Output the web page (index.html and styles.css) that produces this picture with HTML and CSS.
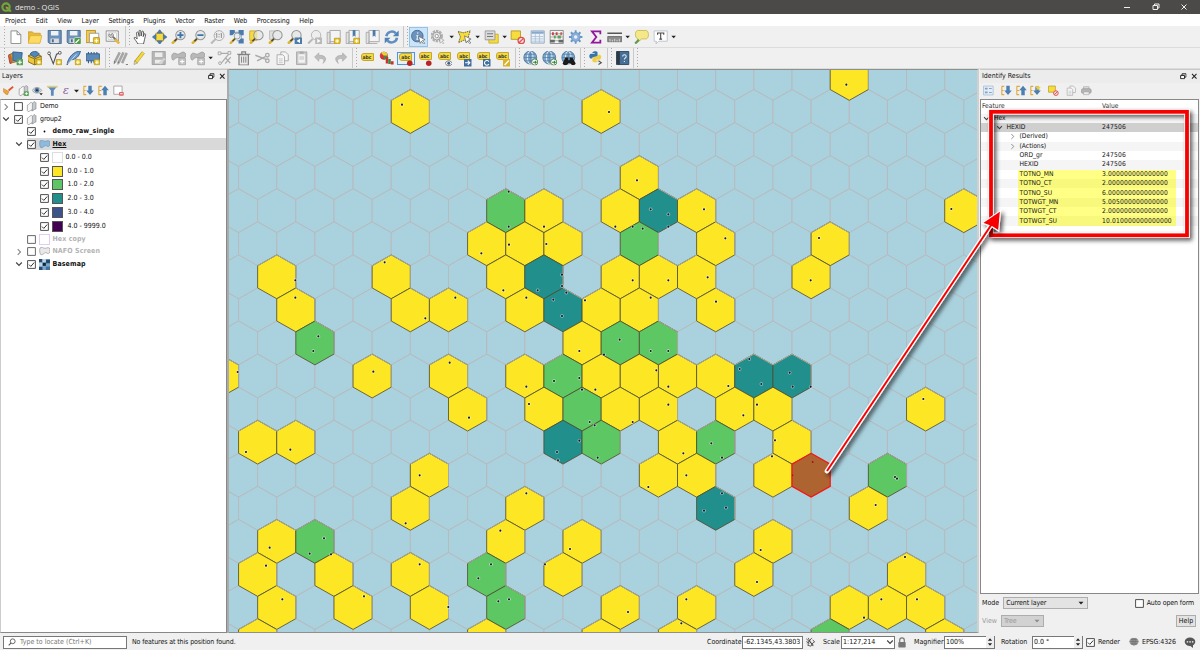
FILE: index.html
```html
<!DOCTYPE html>
<html lang="en">
<head>
<meta charset="utf-8">
<title>demo - QGIS</title>
<link rel="stylesheet" href="styles.css">
</head>
<body>
<svg class="defs" aria-hidden="true">
<defs>
<symbol id="plusbadge" viewBox="0 0 7 7"><rect x=".5" y=".5" width="6" height="6" rx="1" fill="#e8c52c" stroke="#a8891c" stroke-width=".7"/><path d="M3.5 1.7v3.6M1.7 3.5h3.6" stroke="#fff" stroke-width="1.1"/></symbol>
<symbol id="new" viewBox="0 0 16 16"><path d="M3 1.500h6.500l4 4v9.500h-10.500z" fill="#fff" stroke="#8b8b8b"/><path d="M9.500 1.500v4h4" fill="none" stroke="#8b8b8b"/></symbol>
<symbol id="open" viewBox="0 0 16 16"><path d="M1 14.500V2.500h4.500l1.500 1.500h7v3" fill="#e9b93a" stroke="#c99a2a" stroke-width=".8"/><path d="M1 14.700L3.300 6.500h12.400l-2 8.200z" fill="#fddb62" stroke="#d9a932" stroke-width=".8"/></symbol>
<symbol id="save" viewBox="0 0 16 16"><path d="M1 1h14v14h-12.500l-1.500-1.500z" fill="#6a92bd" stroke="#4a6a8c"/><path d="M4 1.500h8v5H4z" fill="#f0f2f4"/><path d="M3.500 9.500h9v5H3.500z" fill="#dcdcdc"/><path d="M5 10.500h2v3H5z" fill="#4a6a8c"/></symbol>
<symbol id="saveas" viewBox="0 0 16 16"><use href="#save"/><rect x="8.500" y="8.500" width="7.500" height="7.500" rx="1.500" fill="#4f9a4c" stroke="#fff" stroke-width=".6"/><path d="M10 14.500l4-4" stroke="#fff" stroke-width="1.400"/></symbol>
<symbol id="layout" viewBox="0 0 16 16"><path d="M1 1h10v13H1z" fill="#f3c94c" stroke="#b58f23"/><path d="M4.500 4h10v10h-10z" fill="#fff" stroke="#9a9a9a"/><use href="#plusbadge" x="8" y="8" width="8" height="8"/></symbol>
<symbol id="layoutmgr" viewBox="0 0 16 16"><path d="M1 1.500h13v11H1z" fill="#fff" stroke="#888"/><path d="M3 3.500h9v7H3z" fill="none" stroke="#bbb" stroke-width=".7"/><path d="M6.500 6l6 6" stroke="#777" stroke-width="2"/><path d="M10.500 10.500l4.500 4.500" stroke="#e4bb35" stroke-width="2.600"/><path d="M4.500 4.500l1.500 1.800 1.500-2.300a2.500 2.500 0 1 1-3 .5" fill="#ccc" stroke="#888"/></symbol>
<symbol id="hand" viewBox="0 0 16 16"><path d="M5 15.500C3.500 12.500 2 11 .8 9c.8-1.200 2.200-.4 3.400 1.200L3.600 3.300c.9-.9 1.700-.5 1.900.2l.9 3.800-.1-6c.8-.8 1.600-.5 1.800.2l.4 5.500.9-5c.8-.5 1.600-.1 1.700.6l-.4 5 1.200-3c.8-.3 1.500.1 1.400.8l-1.200 5.500-1.100 4.600z" fill="#fff" stroke="#333" stroke-width=".8"/></symbol>
<symbol id="pan" viewBox="0 0 16 16"><rect x="4" y="4" width="8" height="8" fill="#f5db40" stroke="#c9a72d"/><path d="M8 0l3 4H5zM8 16l3-4H5zM0 8l4-3v6zM16 8l-4-3v6z" fill="#4b7bab" stroke="#3a6087" stroke-width=".5"/></symbol>
<symbol id="mag" viewBox="0 0 16 16"><path d="M.8 15.200l5-5" stroke="#d9b537" stroke-width="2.800"/><path d="M3.500 12.500l3-3" stroke="#444" stroke-width="1.600"/><circle cx="9.900" cy="6" r="5" fill="#e6e9e8" stroke="#939594" stroke-width="1.100"/></symbol>
<symbol id="zoomin" viewBox="0 0 16 16"><use href="#mag"/><path d="M9.900 2.700v6.600M6.600 6h6.600" stroke="#3f74ab" stroke-width="2"/></symbol>
<symbol id="zoomout" viewBox="0 0 16 16"><use href="#mag"/><path d="M6.600 6h6.600" stroke="#3f74ab" stroke-width="2"/></symbol>
<symbol id="zoomone" viewBox="0 0 16 16"><path d="M1 15l5-5" stroke="#b9b9b9" stroke-width="2.200"/><circle cx="9.500" cy="6.500" r="5.300" fill="#eee" stroke="#aaa"/><path d="M7 4v5M12 4v5M9.500 4.700v1.200M9.500 7.200v1.200M6 5l1-1M11 5l1-1" stroke="#888" stroke-width="1"/></symbol>
<symbol id="zoomfull" viewBox="0 0 16 16"><path d="M3 3h10v9H8" fill="none" stroke="#8fb0d2" stroke-width="1.200"/><path d="M.8 15.200L7 9" stroke="#d9b537" stroke-width="2.600"/><path d="M3.500 12.500l3-3" stroke="#444" stroke-width="1.400"/><circle cx="8.500" cy="7" r="3.200" fill="#e8edf2" stroke="#999"/><path d="M.5.5h5.500v3L3.500 6h-3zM15.500.5H10v3L12.500 6h3zM15.500 15v-5.500h-3L10 12v3z" fill="#4b7bab"/></symbol>
<symbol id="zoomsel" viewBox="0 0 16 16"><path d="M.5 1.500h8v10h-8z" fill="#f5db40" stroke="#caa82c"/><use href="#mag"/><path d="M8.500 2a4.500 4.500 0 0 0 0 8z" fill="#efe07c"/></symbol>
<symbol id="zoomlayer" viewBox="0 0 16 16"><path d="M1.500 1.500h8v9h-8z" fill="#e0e0e0" stroke="#bbb"/><use href="#mag"/></symbol>
<symbol id="zoomlast" viewBox="0 0 16 16"><use href="#mag"/><rect x="8" y="8.500" width="8" height="7.500" fill="#4b7bab"/><path d="M13.700 10l-3.700 2.200 3.700 2.200z" fill="#fff"/></symbol>
<symbol id="zoomnext" viewBox="0 0 16 16"><path d="M1 15l5-5" stroke="#b9b9b9" stroke-width="2.200"/><circle cx="9.500" cy="6" r="5" fill="#eee" stroke="#b3b3b3"/><rect x="8.500" y="8.500" width="7.500" height="7.500" fill="#b9b9b9"/><path d="M10.800 10l3.500 2.200-3.500 2.200z" fill="#fff"/></symbol>
<symbol id="book" viewBox="0 0 16 16"><path d="M4 1h11v12H4z" fill="#f4f4f4" stroke="#a5a5a5"/><path d="M1 3h3v12H1zM4 13v2h9" fill="#e2e2e2" stroke="#a5a5a5" stroke-width=".9"/></symbol>
<symbol id="bookview" viewBox="0 0 16 16"><use href="#book"/><use href="#plusbadge" x="8" y="8.500" width="7.500" height="7.500"/></symbol>
<symbol id="bookmark" viewBox="0 0 16 16"><use href="#book"/><path d="M8 .5h3V8L9.500 6.500 8 8z" fill="#4b7bab"/></symbol>
<symbol id="bookmarkadd" viewBox="0 0 16 16"><use href="#bookmark"/><use href="#plusbadge" x="8.500" y="8.500" width="7.500" height="7.500"/></symbol>
<symbol id="refresh" viewBox="0 0 16 16"><path d="M2.300 7.200A5.900 5.900 0 0 1 12.500 4.200M13.700 8.800A5.900 5.900 0 0 1 3.500 11.800" fill="none" stroke="#5f8fc2" stroke-width="2.700"/><path d="M15.500 1v6.300H9.200zM.5 15V8.700h6.300z" fill="#4f83b8"/></symbol>
<symbol id="cursor" viewBox="0 0 8 9"><path d="M.6.6l6.400 3.300-2.500.8 2.200 2.700-1 .9-2.200-2.800-1.200 2z" fill="#fff" stroke="#666" stroke-width=".7"/></symbol>
<symbol id="identify" viewBox="0 0 16 16"><circle cx="6.500" cy="7" r="6.200" fill="#6b93bd" stroke="#456d96"/><path d="M7 3v1.600M5.500 6.500H7L6.200 10.500h1.500" fill="none" stroke="#dfe9f3" stroke-width="1.300"/><use href="#cursor" x="7" y="6.500" width="9" height="10"/></symbol>
<symbol id="action" viewBox="0 0 16 16"><circle cx="7" cy="7" r="5.500" fill="none" stroke="#b0b0b0" stroke-width="2.400" stroke-dasharray="2.600 .9"/><circle cx="7" cy="7" r="4.200" fill="#e6e6e6" stroke="#999"/><circle cx="7" cy="7" r="1.800" fill="#fff" stroke="#999"/><use href="#cursor" x="8.500" y="8" width="7.500" height="8" opacity=".6"/></symbol>
<symbol id="select" viewBox="0 0 16 16"><path d="M1 2l5.500 1.500L14 1.500 12 7l1 6-6-1.500L1.500 14 3.500 8z" fill="#f6dc3c" stroke="#55502c" stroke-width=".9" stroke-dasharray="1.600 .8"/><use href="#cursor" x="7" y="6" width="9" height="10"/></symbol>
<symbol id="selform" viewBox="0 0 16 16"><path d="M5 5h10v9.500H5z" fill="#f6dc3c" stroke="#cbb02f"/><path d="M1 1.500h10.500v9.500H1z" fill="#dcdcdc" stroke="#999"/><path d="M3 4.500h6.500M3 7.500h6.500" stroke="#777" stroke-width="1.200"/></symbol>
<symbol id="deselect" viewBox="0 0 16 16"><path d="M1 1.500h10v9H1z" fill="#f6dc3c" stroke="#b59b27"/><circle cx="11.800" cy="11.800" r="3.400" fill="#fbdede" stroke="#d94f4f" stroke-width="1.400"/><path d="M9.500 14.100l4.600-4.600" stroke="#d94f4f" stroke-width="1.300"/></symbol>
<symbol id="table" viewBox="0 0 16 16"><path d="M1 1.500h14v13H1z" fill="#eef3f8" stroke="#8aa5c1"/><path d="M1.500 2h13v2.500h-13z" fill="#86a9cd"/><path d="M2 7.500h12M2 10h12M2 12.500h12M5.500 4v10M10 4v10" stroke="#a6bcd3" stroke-width=".8"/></symbol>
<symbol id="abacus" viewBox="0 0 16 16"><path d="M1 1h14v14H1z" fill="#f4f4f4" stroke="#888"/><path d="M1 4.500h14M1 8h14M1 12h14" stroke="#888" stroke-width=".7"/><path d="M3 3h2v3H3zM7 3h2v3H7zM12 3h1.500v3H12z" fill="#c74343"/><path d="M5 6.500h2v3H5zM9 6.500h3.500v3H9z" fill="#58a35b"/><path d="M1 11h5v3H1zM10 11h5v3h-5z" fill="#666"/></symbol>
<symbol id="gear" viewBox="0 0 16 16"><path d="M8 .8v14.400M.8 8h14.400M2.900 2.900l10.200 10.200M13.100 2.900L2.900 13.100" stroke="#6997c8" stroke-width="2"/><circle cx="8" cy="8" r="4.700" fill="#8ab0d8" stroke="#6997c8"/><circle cx="8" cy="8" r="1.900" fill="#eef"/></symbol>
<symbol id="sigma" viewBox="0 0 16 16"><path d="M13 5V2H4l4.700 6L4 14h9v-3" fill="none" stroke="#94169c" stroke-width="1.900"/></symbol>
<symbol id="ruler" viewBox="0 0 16 16"><path d="M0 4h16" stroke="#555" stroke-width="1.600"/><path d="M.5 7.500h15V13H.5z" fill="#8c8c8c" stroke="#6d6d6d"/><path d="M3 10v3M5.500 11v2M8 10v3M10.500 11v2M13 10v3" stroke="#eee" stroke-width=".8"/></symbol>
<symbol id="tip" viewBox="0 0 16 16"><path d="M3.500 1h9.500c3 1 3 8 0 9H8l-4.500 4 .5-4c-3.500-1-3.500-8-.5-9z" fill="#f4e889" stroke="#cdbc55"/><path d="M1 15l4-4" stroke="#5b9b59" stroke-width="2.300"/></symbol>
<symbol id="textbox" viewBox="0 0 16 16"><path d="M1 1.500h14v11H6L3 15.500l.5-3H1z" fill="#fff" stroke="#b8c4ce"/><path d="M4.700 5.500V3.700h6.600v1.800M8 3.700v6.600M6.500 10.300h3" fill="none" stroke="#4c4c4c" stroke-width="1.200"/></symbol>
<symbol id="dsm" viewBox="0 0 16 16"><path d="M0 5l7-3 2 9-7 3z" fill="#d1633e" stroke="#9e4529"/><path d="M2.500 4l8-2 2 9-8 2z" fill="#e3a53c" stroke="#aa7929"/><path d="M5 1.500l10 .8-1 9.500-9-1z" fill="#4f83b3" stroke="#33618d"/><rect x="9" y="9" width="7" height="7" rx="1" fill="#5ca35a"/><path d="M12.500 10.300v4.400M10.300 12.500h4.400" stroke="#fff" stroke-width="1.200"/></symbol>
<symbol id="gpkg" viewBox="0 0 16 16"><path d="M0 6l8-3 7 3v6l-7 3.500L1 12z" fill="#eec53c" stroke="#81681d"/><path d="M1 6l7 3v6.500M8 9l7-3" fill="none" stroke="#81681d"/><path d="M3 4c2-4 8-4 10 0l-5 3.500z" fill="#5287bb" stroke="#335f8a"/><use href="#plusbadge" x="9" y="9" width="7" height="7"/></symbol>
<symbol id="shp" viewBox="0 0 16 16"><path d="M2 3l4.500 11L10 4l4-1.500" fill="none" stroke="#555" stroke-width="1.200"/><circle cx="2" cy="3" r="1.500" fill="#fff" stroke="#555"/><circle cx="13.500" cy="2.500" r="1.500" fill="#fff" stroke="#555"/><use href="#plusbadge" x="9" y="9" width="7" height="7"/></symbol>
<symbol id="feather" viewBox="0 0 16 16"><path d="M.8 15.500C2 7 8 1 15.200.5c-1 6-5 9-10 9.500z" fill="#6d9dcf" stroke="#355f8b"/><path d="M1.500 14.500L11 4" stroke="#fff" stroke-width=".7"/><use href="#plusbadge" x="9" y="9" width="7" height="7"/></symbol>
<symbol id="chip" viewBox="0 0 16 16"><path d="M3.500 1.500v12M6.500 1.500v12M9.500 1.500v12M12.500 1.500v12" stroke="#405b78" stroke-width="1.200"/><path d="M.8 3.500h14.400v7.500H.8z" fill="#5b8abb" stroke="#355f8b"/><use href="#plusbadge" x="9" y="9" width="7" height="7"/></symbol>
<symbol id="pencils" viewBox="0 0 16 16"><path d="M1.500 13L7 2M5.500 13.500L11 2M9.500 13.500L14.500 2.500" stroke="#a6a6a6" stroke-width="2.700"/><path d="M1 14.500l.5-3M5 15l.5-3M13.500 15H16" stroke="#555" stroke-width=".8"/></symbol>
<symbol id="pencil" viewBox="0 0 16 16"><path d="M3.800 12.500L12 2" stroke="#b3982b" stroke-width="3.800"/><path d="M4 12.500L12 2.200" stroke="#f5d83b" stroke-width="2.600"/><path d="M2.500 11l3.100 2.400L2 15z" fill="#e4d9ac" stroke="#8a7a3b" stroke-width=".5"/></symbol>
<symbol id="savegray" viewBox="0 0 16 16"><path d="M1 1h14v14H1z" fill="#b5b5b5" stroke="#a0a0a0"/><path d="M4 2h8v5H4zM4 10h8v4H4z" fill="#ececec"/><path d="M9 14l5.500-5.500" stroke="#d5d5d5" stroke-width="2.500"/></symbol>
<symbol id="blob" viewBox="0 0 16 16"><path d="M1 9C-.5 4.500 2 1.500 5.500 3.500S11 .5 14 2s1.500 6.500-1.500 6.500S7 6.500 5 8 2 11.500 1 9z" fill="#b8b8b8" stroke="#a0a0a0"/><rect x="8" y="8" width="7.500" height="7.500" rx="1" fill="#c4c4c4" stroke="#999" stroke-width=".7"/><path d="M11.700 9.500v4.500M9.500 11.700H14" stroke="#fff" stroke-width="1.200"/></symbol>
<symbol id="vertex" viewBox="0 0 16 16"><path d="M1 3h12L3.500 14.500M8.500 7.500l5.500 6M14.500 7l-6 7" fill="none" stroke="#aaa" stroke-width="1.300"/><circle cx="3" cy="13.500" r="1.500" fill="#eee" stroke="#aaa"/><path d="M11.500 1h3v3h-3zM1 1.500h3v3H1z" fill="#eee" stroke="#aaa"/></symbol>
<symbol id="trash" viewBox="0 0 16 16"><path d="M3 4.500h10v11H3zM1 4h14M6 3.500V1.500h4v2" fill="#eaeaea" stroke="#808080" stroke-width="1.300"/><path d="M5.700 6.500V13M8 6.500V13M10.300 6.500V13" stroke="#808080" stroke-width="1"/></symbol>
<symbol id="cut" viewBox="0 0 16 16"><path d="M0 5l11.500 4.500M2 11l9-4.500" stroke="#aaa" stroke-width="1.600"/><circle cx="13" cy="5" r="1.900" fill="none" stroke="#aaa" stroke-width="1.400"/><circle cx="13" cy="11" r="1.900" fill="none" stroke="#aaa" stroke-width="1.400"/></symbol>
<symbol id="copy" viewBox="0 0 16 16"><path d="M6 1.500h5l3 3V11H6z" fill="#f5f5f5" stroke="#aaa"/><path d="M2 4.500h6l2 2V15H2z" fill="#f5f5f5" stroke="#aaa"/><path d="M4 9h4M4 11h4M4 13h4" stroke="#c5c5c5"/></symbol>
<symbol id="paste" viewBox="0 0 16 16"><path d="M2.500 1.500h11v13.500h-11z" fill="#c9c9c9" stroke="#aaa"/><path d="M4.500 4h7v9h-7z" fill="#f2f2f2"/><path d="M6 1h4v2.500H6z" fill="#aaa"/><path d="M5.500 7h5M5.500 9h5" stroke="#bbb"/></symbol>
<symbol id="undo" viewBox="0 0 16 16"><path d="M6 2.500L1.500 7 6 11.500V8.800c5-.7 6.500.9 4.500 5C16 9 13 4.700 6 5.200z" fill="#bdbdbd" stroke="#a5a5a5" stroke-width=".6"/></symbol>
<symbol id="pie" viewBox="0 0 16 16"><circle cx="5" cy="5.500" r="4" fill="#dc3434" stroke="#813" stroke-width=".4"/><path d="M5 5.500L2 2.700A4 4 0 0 1 9 5.500z" fill="#e8cf3c"/><path d="M5 5.500h4a4 4 0 0 1-4 4z" fill="#438c43"/><path d="M7 7h2.700v7H7z" fill="#cf2f2f"/><path d="M9.700 9h2.700v5.500H9.700z" fill="#338b3f"/><path d="M12.400 11.500h3V15h-3z" fill="#cf2f2f"/></symbol>
<symbol id="globe" viewBox="0 0 16 16"><circle cx="7.500" cy="7.500" r="6.900" fill="#7fa9cf" stroke="#54799e"/><ellipse cx="7.500" cy="7.500" rx="3" ry="6.700" fill="none" stroke="#e9f1f8"/><path d="M1 7.500h13M2 4h11M2 11h11M7.500 1v13" stroke="#4b739a" stroke-width=".7"/></symbol>
<symbol id="globeadd" viewBox="0 0 16 16"><use href="#globe"/><circle cx="12.300" cy="12.300" r="3.300" fill="#fff" stroke="#437f43"/><path d="M10.500 12.500h3.500M12.500 11l1.500 1.500-1.500 1.500" stroke="#39853d" stroke-width="1.100" fill="none"/></symbol>
<symbol id="globefind" viewBox="0 0 16 16"><use href="#globe"/><path d="M4.500 7.500h3v3h1.500v-3h3l3.500 6.500c-1 2.500-5 2-5.500-.5H7.500C7 16 2.500 16.500 1.500 14z" fill="#1c1c1c"/></symbol>
<symbol id="python" viewBox="0 0 16 16"><path d="M4 8.500H2.500c-2-1-1.500-5 .5-5h4v-.8H4.500C4 .7 9-.2 10 1.800v4C9.500 7 5 6 4 8.500z" fill="#3974a8"/><path d="M11 4.500h1.500c2.500 1 1.500 5.300-.5 5.300H8v.8h2.500c.5 2-4.500 3-6 1V7.800C5.500 6.500 10 7.300 11 4.500z" fill="#efcf45"/><path d="M11 11l3 2-3 2" stroke="#555" fill="none" stroke-width="1.200"/></symbol>
<symbol id="help" viewBox="0 0 16 16"><path d="M1.500 1h13v14h-13z" fill="#466f97" stroke="#294866"/><path d="M1.500 1H5v14H1.500z" fill="#303841"/><path d="M8 6.300C8 3.900 11.800 4 11.800 6.300c0 1.600-2 1.600-2 3.400M9.800 11.100v1.300" fill="none" stroke="#e9eff5" stroke-width="1.100"/></symbol>
<symbol id="brush" viewBox="0 0 16 16"><path d="M8.500 8L15 2.500" stroke="#e1562e" stroke-width="2.600"/><path d="M1 5l8 4.500L7 14C4.500 14 1.500 11.500.5 9z" fill="#e9a53a" stroke="#b5742b" stroke-width=".6"/></symbol>
<symbol id="group" viewBox="0 0 16 16"><path d="M7.500 4.500C10 3.500 10 1.500 13 1l1.500 1.500v9c-3 .5-3 2.500-6 3z" fill="#c5cace" stroke="#808080" stroke-width=".9"/><path d="M2 6c2.500-.5 3-3.500 6-4l1.300 1v9.500c-3 .5-3 2.500-6 3L2 14z" fill="#f6f6f6" stroke="#808080" stroke-width=".9"/></symbol>
<symbol id="groupadd" viewBox="0 0 16 16"><use href="#group"/><rect x="9" y="9" width="7" height="7" rx="1" fill="#5ca35a"/><path d="M12.500 10.300v4.400M10.300 12.500h4.400" stroke="#fff" stroke-width="1.200"/></symbol>
<symbol id="eye" viewBox="0 0 16 16"><path d="M.5 8c4-6 10-6 14 0-4 5-10 5-14 0z" fill="#ddd" stroke="#8a8a8a"/><circle cx="7.500" cy="7.500" r="3.600" fill="#5682aa"/><circle cx="7.500" cy="7.500" r="1.400" fill="#222"/><path d="M11 12h5l-2.500 3z" fill="#222"/></symbol>
<symbol id="filter" viewBox="0 0 16 16"><path d="M1 2h14L10 8v7.500H6V8z" fill="#5b8abb"/><path d="M0 1h16v2.500H0z" fill="#ddcf8a"/></symbol>
<symbol id="expand" viewBox="0 0 16 16"><path d="M1.500 2v12M1 2h4M1 8h3M1 14h4" stroke="#e0a93c" stroke-width="1.600" fill="none"/><path d="M8 1h5v7h3l-5.500 6.500L5 8h3z" fill="#4c7eaf"/></symbol>
<symbol id="collapse" viewBox="0 0 16 16"><path d="M1.500 2v12M1 2h5M1 8h4M1 14h4" stroke="#e0a93c" stroke-width="1.600" fill="none"/><path d="M10.500 1l5.500 6.500h-3V15H8V7.500H5z" fill="#4c7eaf"/></symbol>
<symbol id="expandnew" viewBox="0 0 16 16"><path d="M1.500 2v12M1 2h4M1 8h3M1 14h4" stroke="#e0a93c" stroke-width="1.600" fill="none"/><path d="M8 2h5v6h3l-5.500 6.500L5 8h3z" fill="#4c7eaf"/><path d="M12 0l1.200 2.500L16 3l-2 1.800.5 2.700-2.500-1.300L9.500 7.500l.5-2.700L8 3l2.800-.5z" fill="#f0cc3b"/></symbol>
<symbol id="remove" viewBox="0 0 16 16"><path d="M1.500 1.500h12v12h-12z" fill="#fff" stroke="#999" stroke-width="1.200"/><rect x="9" y="10" width="7" height="5.500" rx="1.500" fill="#e26464"/><path d="M10.500 12.700h4" stroke="#fff" stroke-width="1.300"/></symbol>
<symbol id="poly" viewBox="0 0 16 16"><path d="M1 5c0-3.500 3-3.500 6-2S13 1 15 3s1 8-1.500 8-3-2.500-5-1-5.500 4-6.500 2S1 8 1 5z" fill="#8fbadd" stroke="#6895b8"/></symbol>
<symbol id="polygray" viewBox="0 0 16 16"><path d="M1 5c0-3.500 3-3.500 6-2S13 1 15 3s1 8-1.500 8-3-2.500-5-1-5.500 4-6.500 2S1 8 1 5z" fill="#e9e9e9" stroke="#999"/></symbol>
<symbol id="raster" viewBox="0 0 16 16"><path d="M0 0h16v16H0z" fill="#7ba7cc"/><path d="M0 0h5v5H0zM10 1h6v5h-6zM0 11h5v5H0z" fill="#264b70"/><path d="M5 5h5v5H5z" fill="#10253b"/><path d="M5 0h5v5H5zM0 5h5v6H0z" fill="#bcd5e8"/><path d="M10 11h6v5h-6z" fill="#446f96"/></symbol>
<symbol id="form" viewBox="0 0 16 16"><path d="M1 1.500h14v13H1z" fill="#e4edf6" stroke="#9db5ce"/><path d="M3 4h4v2.500H3zM3 9.500h4V12H3z" fill="#7fa3c8"/><path d="M9 5h4M9 11h4" stroke="#7fa3c8" stroke-width="1.500"/></symbol>
<symbol id="print" viewBox="0 0 16 16"><path d="M4 2.500h8V6H4z" fill="#ddd" stroke="#aaa"/><rect x="1" y="5.500" width="14" height="6.500" rx="2" fill="#b5b5b5" stroke="#999"/><path d="M4 10h8v4H4z" fill="#eee" stroke="#aaa"/></symbol>
<symbol id="float" viewBox="0 0 8 8"><path d="M2.500 2.500V1h5v4H6" fill="none" stroke="#222" stroke-width="1.200"/><path d="M.8 3h4.700v4H.8z" fill="#fff" stroke="#222" stroke-width="1.200"/></symbol>
<symbol id="close" viewBox="0 0 8 8"><path d="M1.200 1.200l5.600 5.600M6.800 1.200L1.200 6.800" stroke="#222" stroke-width="1.300"/></symbol>
<symbol id="check" viewBox="0 0 9 9"><path d="M.6.6h7.800v7.800H.6z" fill="#fff" stroke="#3c3c3c" stroke-width=".9"/><path d="M2 4.600l1.800 1.800L7.200 2.500" fill="none" stroke="#333" stroke-width="1"/></symbol>
<symbol id="box" viewBox="0 0 9 9"><path d="M.6.6h7.800v7.800H.6z" fill="#fff" stroke="#3c3c3c" stroke-width=".9"/></symbol>
<symbol id="down" viewBox="0 0 8 8"><path d="M1.200 2.500L4 5.300l2.800-2.800" fill="none" stroke="#444" stroke-width="1.200"/></symbol>
<symbol id="right" viewBox="0 0 8 8"><path d="M2.700 1.200L5.500 4 2.700 6.800" fill="none" stroke="#888" stroke-width="1.100"/></symbol>
<symbol id="tri" viewBox="0 0 8 8"><path d="M1.500 2.700h5L4 5.500z" fill="#222"/></symbol>
<symbol id="spin" viewBox="0 0 8 14"><path d="M1.500 5.500h5L4 2.500zM1.500 8.500h5L4 11.500z" fill="#222"/></symbol>
</defs>
</svg>

<div class="app">
  <header class="titlebar">
    <svg class="logo" viewBox="0 0 12 12"><circle cx="5.500" cy="5.500" r="4" fill="none" stroke="#70a93a" stroke-width="2.300"/><path d="M5.500 5.500h2.500l3.500 4-1 1.500-3-1z" fill="#70a93a"/><path d="M5 5l2.500.5L5.500 8z" fill="#e2882e"/></svg>
    <span class="apptitle">demo - QGIS</span>
    <svg class="winbtns" viewBox="0 0 70 14"><path d="M2 7.500h6M31 5.500h4.500v4H31zM32.500 5.500V4H37v4h-1.500M59.500 4.500l5 5M64.500 4.500l-5 5" fill="none" stroke="#eee" stroke-width="1"/></svg>
  </header>
  <nav class="menubar"><span>Project</span><span>Edit</span><span>View</span><span>Layer</span><span>Settings</span><span>Plugins</span><span>Vector</span><span>Raster</span><span>Web</span><span>Processing</span><span>Help</span></nav>

  <div class="toolbar bar-one">
    <div class="tools"><svg><use href="#new"/></svg><svg><use href="#open"/></svg><svg><use href="#save"/></svg><svg><use href="#saveas"/></svg><svg><use href="#layout"/></svg><svg><use href="#layoutmgr"/></svg></div>
    <div class="tools"><svg><use href="#hand"/></svg><svg><use href="#pan"/></svg><svg><use href="#zoomin"/></svg><svg><use href="#zoomout"/></svg><svg><use href="#zoomone"/></svg><svg><use href="#zoomfull"/></svg><svg><use href="#zoomsel"/></svg><svg><use href="#zoomlayer"/></svg><svg><use href="#zoomlast"/></svg><svg><use href="#zoomnext"/></svg><svg><use href="#bookview"/></svg><svg><use href="#bookmarkadd"/></svg><svg><use href="#bookmark"/></svg><svg><use href="#refresh"/></svg></div>
    <div class="tools"><svg class="active"><use href="#identify"/></svg><svg><use href="#action"/></svg><svg class="dd"><use href="#tri"/></svg><svg><use href="#select"/></svg><svg class="dd"><use href="#tri"/></svg><svg><use href="#selform"/></svg><svg class="dd"><use href="#tri"/></svg><svg><use href="#deselect"/></svg><svg><use href="#table"/></svg><svg><use href="#abacus"/></svg><svg><use href="#gear"/></svg><svg><use href="#sigma"/></svg><svg><use href="#ruler"/></svg><svg class="dd"><use href="#tri"/></svg><svg><use href="#tip"/></svg><svg><use href="#textbox"/></svg><svg class="dd"><use href="#tri"/></svg></div>
  </div>
  <div class="toolbar bar-two">
    <div class="tools"><svg><use href="#dsm"/></svg><svg><use href="#gpkg"/></svg><svg><use href="#shp"/></svg><svg><use href="#feather"/></svg><svg><use href="#chip"/></svg></div>
    <div class="tools"><svg><use href="#pencils"/></svg><svg><use href="#pencil"/></svg><svg><use href="#savegray"/></svg><svg><use href="#blob"/></svg><svg><use href="#blob"/></svg><svg class="dd"><use href="#tri"/></svg><svg><use href="#vertex"/></svg><svg><use href="#trash"/></svg><svg><use href="#cut"/></svg><svg><use href="#copy"/></svg><svg><use href="#paste"/></svg><svg><use href="#undo"/></svg><svg class="flip"><use href="#undo"/></svg></div>
    <div class="tools">
      <span class="label"><i>abc</i></span><svg><use href="#pie"/></svg><span class="label boxed"><i>abc</i><svg viewBox="0 0 7 7"><circle cx="3.500" cy="4" r="2.600" fill="#b82424"/></svg></span><span class="label small"><i>abc</i><svg viewBox="0 0 7 7"><circle cx="3.500" cy="4" r="2.600" fill="#b82424"/></svg></span><span class="label small"><i>abc</i><svg viewBox="0 0 7 7"><path d="M0 4c2-3 5-3 7 0-2 3-5 3-7 0z" fill="#fff" stroke="#444" stroke-width=".7"/><circle cx="3.500" cy="4" r="1.400" fill="#335f8a"/></svg></span><span class="label small"><i>abc</i><svg viewBox="0 0 7 7"><path d="M0 0h7v7H0z" fill="#3f6e9e"/><path d="M1 3.500h4.500M3.500 1.500l2 2-2 2" stroke="#fff" fill="none"/></svg></span><span class="label small"><i>abc</i><svg viewBox="0 0 7 7"><path d="M0 0h7v7H0z" fill="#3f6e9e"/><path d="M5.500 2.500a2.200 2.200 0 1 0 0 2.200" stroke="#fff" fill="none"/></svg></span><span class="label small"><i>abc</i><svg viewBox="0 0 7 7"><path d="M0 0h7v7H0z" fill="#dab22c"/><path d="M1.500 5.500l4-4" stroke="#fff" stroke-width="1.300"/></svg></span>
    </div>
    <div class="tools"><svg><use href="#globeadd"/></svg><svg><use href="#globeadd"/></svg><svg><use href="#globefind"/></svg></div>
    <div class="tools"><svg><use href="#python"/></svg></div>
    <div class="tools"><svg><use href="#help"/></svg></div>
    <div class="tools"></div>
  </div>

  <main class="work">
    <aside class="panel layers">
      <div class="panelhead"><span>Layers</span><svg><use href="#float"/></svg><svg><use href="#close"/></svg></div>
      <div class="paneltools"><svg><use href="#brush"/></svg><svg><use href="#groupadd"/></svg><svg><use href="#eye"/></svg><svg><use href="#filter"/></svg><span class="eps">ε</span><svg class="dd"><use href="#tri"/></svg><svg><use href="#expand"/></svg><svg><use href="#collapse"/></svg><svg><use href="#remove"/></svg></div>
      <div class="tree">
        <div class="row"><svg class="arr"><use href="#right"/></svg><svg class="chk"><use href="#box"/></svg><svg class="lic"><use href="#group"/></svg><span>Demo</span></div>
        <div class="row"><svg class="arr"><use href="#down"/></svg><svg class="chk"><use href="#check"/></svg><svg class="lic"><use href="#group"/></svg><span>group2</span></div>
        <div class="row in1 bold"><i class="arr"></i><svg class="chk"><use href="#check"/></svg><svg class="lic" viewBox="0 0 11 11"><circle cx="5.500" cy="5.500" r=".9"/></svg><span>demo_raw_single</span></div>
        <div class="row in1 bold sel"><svg class="arr"><use href="#down"/></svg><div class="selfill"><svg class="chk"><use href="#check"/></svg><svg class="lic"><use href="#poly"/></svg><span class="ul">Hex</span></div></div>
        <div class="row cls"><svg class="chk"><use href="#check"/></svg><b class="sw white"></b><span>0.0 - 0.0</span></div>
        <div class="row cls"><svg class="chk"><use href="#check"/></svg><b class="sw yellow"></b><span>0.0 - 1.0</span></div>
        <div class="row cls"><svg class="chk"><use href="#check"/></svg><b class="sw green"></b><span>1.0 - 2.0</span></div>
        <div class="row cls"><svg class="chk"><use href="#check"/></svg><b class="sw teal"></b><span>2.0 - 3.0</span></div>
        <div class="row cls"><svg class="chk"><use href="#check"/></svg><b class="sw blue"></b><span>3.0 - 4.0</span></div>
        <div class="row cls"><svg class="chk"><use href="#check"/></svg><b class="sw purple"></b><span>4.0 - 9999.0</span></div>
        <div class="row in1 bold off"><i class="arr"></i><svg class="chk"><use href="#box"/></svg><b class="sw pink"></b><span>Hex copy</span></div>
        <div class="row in1 bold off"><svg class="arr"><use href="#right"/></svg><svg class="chk"><use href="#box"/></svg><svg class="lic"><use href="#polygray"/></svg><span>NAFO Screen</span></div>
        <div class="row in1 bold"><svg class="arr"><use href="#down"/></svg><svg class="chk"><use href="#check"/></svg><svg class="lic"><use href="#raster"/></svg><span>Basemap</span></div>
      </div>
    </aside>

    <section class="mapwrap"><svg id="map" class="map" viewBox="229 69 749 563"></svg></section>

    <aside class="panel identify">
      <div class="panelhead"><span>Identify Results</span><svg><use href="#float"/></svg><svg><use href="#close"/></svg></div>
      <div class="paneltools"><svg><use href="#form"/></svg><svg class="gap"><use href="#expand"/></svg><svg><use href="#collapse"/></svg><svg><use href="#expandnew"/></svg><svg class="gap"><use href="#deselect"/></svg><svg class="gap"><use href="#copy"/></svg><svg><use href="#print"/></svg></div>
      <div class="results">
        <div class="rhead"><span>Feature</span><span>Value</span></div>
        <div class="rr alt hexrow"><svg><use href="#down"/></svg><span>Hex</span></div>
        <div class="rr cur d1"><svg><use href="#down"/></svg><span>HEXID</span><em>247506</em></div>
        <div class="rr d2"><svg><use href="#right"/></svg><span>(Derived)</span></div>
        <div class="rr d2 alt"><svg><use href="#right"/></svg><span>(Actions)</span></div>
        <div class="rr d2"><svg></svg><span>ORD_gr</span><em>247506</em></div>
        <div class="rr d2 alt"><svg></svg><span>HEXID</span><em>247506</em></div>
        <div class="rr d2 hl"><svg></svg><span>TOTNO_MN</span><em>3.000000000000000</em></div>
        <div class="rr d2 hl alt"><svg></svg><span>TOTNO_CT</span><em>2.000000000000000</em></div>
        <div class="rr d2 hl"><svg></svg><span>TOTNO_SU</span><em>6.000000000000000</em></div>
        <div class="rr d2 hl alt"><svg></svg><span>TOTWGT_MN</span><em>5.005000000000000</em></div>
        <div class="rr d2 hl"><svg></svg><span>TOTWGT_CT</span><em>2.000000000000000</em></div>
        <div class="rr d2 hl alt"><svg></svg><span>TOTWGT_SU</span><em>10.010000000000000</em></div>
      </div>
      <div class="opts">
        <span>Mode</span><span class="combo">Current layer<svg><use href="#tri"/></svg></span>
        <span class="auto"><svg><use href="#box"/></svg>Auto open form</span>
      </div>
      <div class="opts second">
        <span class="dim">View</span><span class="combo tree-combo">Tree<svg><use href="#tri"/></svg></span>
        <span class="btn">Help</span>
      </div>
    </aside>
  </main>

  <footer class="status">
    <span class="locate"><svg viewBox="0 0 9 9"><circle cx="5.300" cy="3.700" r="2.700" fill="none" stroke="#555"/><path d="M3.300 5.700L.8 8.200" stroke="#555" stroke-width="1.200"/></svg>Type to locate (Ctrl+K)</span>
    <span class="msg">No features at this position found.</span>
    <span class="lbl coord">Coordinate</span><span class="field f-coord">-62.1345,43.3803</span>
    <svg class="sic" viewBox="0 0 12 12"><path d="M2 5l3 1.500L3.500 9l3.500 1 2-3.500 2-1-2-2.500M4 1l5 9M2 2l8 7M8 1L3 7" fill="none" stroke="#444" stroke-width=".9"/></svg>
    <span class="lbl scale">Scale</span><span class="field f-scale">1:127,214<svg><use href="#down"/></svg></span>
    <svg class="sic" viewBox="0 0 12 12"><path d="M3.500 6V3.500a2.500 2.500 0 0 1 5 0V6" fill="none" stroke="#777" stroke-width="1.300"/><rect x="2" y="5.500" width="8" height="6" rx=".8" fill="#777"/></svg>
    <span class="lbl magn">Magnifier</span><span class="field f-mag">100%<svg class="spin"><use href="#spin"/></svg></span>
    <span class="lbl rot">Rotation</span><span class="field f-rot">0.0 °<svg class="spin"><use href="#spin"/></svg></span>
    <span class="lbl render"><svg><use href="#check"/></svg>Render</span>
    <span class="lbl epsg"><svg viewBox="0 0 11 11"><ellipse cx="5.500" cy="5" rx="5" ry="4" fill="#999"/><path d="M.5 5h10M5.500 1v9M2 2.500h7M2 7.500h7M3.500 1v8M7.500 1v8" stroke="#666" stroke-width=".6"/></svg>EPSG:4326</span>
    <svg class="bubble" viewBox="0 0 12 11"><ellipse cx="6" cy="4.800" rx="5.300" ry="4.200" fill="#555"/><path d="M5 8l4 0 0 3z" fill="#555"/><path d="M2.700 4.800h1.500M5.300 4.800h1.500M7.900 4.800h1.500" stroke="#fff" stroke-width="1.300"/></svg>
  </footer>

  <svg class="callout" viewBox="0 0 1200 650">
    <defs><filter id="sh" x="-10%" y="-10%" width="125%" height="125%"><feDropShadow dx="2.500" dy="2.500" stdDeviation="2" flood-color="#000" flood-opacity=".65"/></filter></defs>
    <g filter="url(#sh)"><rect x="991" y="111.800" width="196" height="123.500" fill="none" stroke="#fff" stroke-width="5.400"/><rect x="991" y="111.800" width="196" height="123.500" fill="none" stroke="#f60404" stroke-width="3.800"/></g>
    <g filter="url(#sh)"><path d="M827 471L991 225" stroke="#fff" stroke-width="4.600" stroke-linecap="round"/><path d="M1000.500 210.500l-1.800 20.500-7-4.500-9.500-3.500z" fill="#f60404" stroke="#fff" stroke-width="1.100"/><path d="M827 471L992.500 223" stroke="#f60404" stroke-width="2"/></g>
  </svg>
</div>
<script src="map.js"></script>
</body>
</html>
```
FILE: styles.css
```css
* { box-sizing: border-box; }
body { margin: 0; background: #f0f0f0; font-family: "DejaVu Sans Condensed", "DejaVu Sans", sans-serif; font-stretch: condensed; font-size: 7px; line-height: 9px; color: #111; }
.defs { position: absolute; width: 0; height: 0; }
.app { width: 1200px; height: 650px; overflow: hidden; display: grid; grid-template-rows: 14px 12px 22px 21px 564px 17px; position: relative; }
svg { display: block; flex: none; }
span { white-space: nowrap; }

.titlebar { background: #4b4a48; color: #e8e8e8; display: flex; align-items: center; padding-left: 1px; }
.logo { width: 11px; height: 11px; margin-right: 3px; }
.apptitle { font-family: "Open Sans", sans-serif; font-stretch: normal; font-size: 7.500px; }
.winbtns { width: 70px; height: 14px; margin-left: auto; margin-right: 8px; }
.menubar { background: #fff; display: flex; align-items: center; gap: 9.700px; padding: 2px 0 0 5px; letter-spacing: -.08px; }

.toolbar { display: grid; background: #f0f0f0; border-bottom: 1px solid #dcdcdc; }
.bar-one { grid-template-columns: 124.500px 278.500px 1fr; }
.bar-two { grid-template-columns: 104.500px 247px 163px 65.500px 26.500px 26.500px 1fr; }
.tools { display: flex; align-items: center; padding-left: 5px; border-left: 1px solid #c9c9c9; background: radial-gradient(circle, #aaa .6px, transparent .7px) 2px 2px / 3px 3px repeat-y; }
.tools:first-child { border-left-color: #f0f0f0; }
.tools > svg { width: 19.350px; height: 20px; padding: 2.500px 2.200px; }
.tools > svg.dd { width: 7.300px; padding: 6px 0; }
.tools > svg.active { background: #cce4f7; box-shadow: inset 0 0 0 1px #90c3ee; }
.tools > svg.flip { transform: scaleX(-1); }
.label { width: 19.350px; height: 15px; padding: 2.500px 3px; position: relative; font-size: 5px; line-height: 7px; }
.label i { display: block; width: 13px; height: 8px; background: #f5da3f; border: .6px solid #c4a72f; border-radius: 3px 0 0 3px; font-style: normal; font-weight: bold; text-align: center; color: #333; }
.label.small { padding-top: 1px; }
.label.boxed { outline: 1px solid #5b93cf; outline-offset: -2px; background: #e5f0fa; }
.label svg { position: absolute; right: 2px; bottom: -1px; width: 7.500px; height: 7.500px; }

.work { display: grid; grid-template-columns: 229px 750px 221px; }
.panel { display: flex; flex-direction: column; min-width: 0; }
.panelhead { height: 14px; display: flex; align-items: center; padding: 0 2px 0 2px; gap: 4px; background: #ececec; border-top: 1px solid #c8c8c8; }
.panelhead span { flex: 1; }
.panelhead svg { width: 6.500px; height: 6.500px; }
.identify .panelhead { padding-right: 3px; }
.paneltools { height: 16px; display: flex; align-items: center; padding: 0 0 1px 1px; }
.paneltools svg { width: 14.600px; height: 11px; padding: 0 1.500px; }
.paneltools svg.dd { width: 9px; height: 8px; padding: 0; margin-right: 0; }
.identify .gap { margin-left: 3.500px; }
.eps { width: 13px; text-align: center; color: #8d5b95; font: italic 11px/11px "DejaVu Serif", serif; }
.layers { border-right: 2px solid #ababab; }
.tree { width: 226.500px; height: 534px; padding-top: .6px; background: #fff; border: 1px solid #888; border-left-color: #ccc; }
.row { height: 12.500px; display: flex; align-items: center; padding-left: 1px; }
.row span { padding-left: 3px; }
.row:nth-child(-n+2) span { letter-spacing: -.12px; }
.arr { width: 8px; height: 8px; margin-right: 4px; flex: none; }
.chk { width: 9px; height: 9px; margin-right: 3px; }
.lic { width: 11px; height: 11px; }
.in1 { padding-left: 13.500px; }
.bold { font-weight: bold; letter-spacing: .1px; }
.off { color: #b3b3b3; }
.off .chk { opacity: .85; }
.row .ul { padding: 0; margin-left: 3px; text-decoration: underline; }
.selfill { display: flex; align-items: center; flex: 1; height: 12px; background: #d9d9d9; }
.cls { height: 13.750px; padding-left: 38.500px; }
.cls span { padding-left: 5px; }
.sw { width: 11px; height: 11px; flex: none; border: .7px solid #555; }
.white { background: #fff; border-color: #ddd; margin-right: -2px; }
.yellow { background: #fde725; } .green { background: #5dc863; } .teal { background: #21908d; } .blue { background: #3b528b; } .purple { background: #440154; }
.pink { background: #fff; border-color: #e3cdf0; }

.mapwrap { border-top: 1px solid #8f8f8f; border-right: 2px solid #d0d0d0; overflow: hidden; background: #aad2de; border-bottom: 1px solid #8f8f8f; }
.map { width: 749px; height: 563px; margin-top: -1px; }

.identify { padding-left: 1px; }
.results { height: 495px; background: #fff; border: 1px solid #888; margin-right: 1px; font-size: 6.700px; }
.rhead { height: 13.500px; line-height: 13px; display: grid; grid-template-columns: 120px 1fr; padding-left: 1px; color: #333; }
.rr { height: 9.370px; display: flex; align-items: center; padding-left: 2px; position: relative; }
.rr svg { width: 7px; height: 7px; margin-right: 4px; }
.rr em { position: absolute; left: 121px; font-style: normal; letter-spacing: .16px; }
.d1 { padding-left: 14.500px; }
.d2 { padding-left: 27.500px; }
.alt { background: #f5f5f5; }
.cur { background: #cfcfcf; }
.hl { background: linear-gradient(#ffff85, #ffff85) 37px 0 / 158px 100% no-repeat; }
.hl.alt { background: linear-gradient(#f8f87c, #f8f87c) 37px 0 / 158px 100% no-repeat #f5f5f5; }
.opts { height: 18px; display: flex; align-items: center; padding: 0 6px 0 2px; gap: 4px; }
.combo { width: 85px; height: 12px; padding: 1px 2px; border: 1px solid #adadad; background: #e3e3e3; display: flex; align-items: center; justify-content: space-between; letter-spacing: -.1px; }
.combo svg { width: 8px; height: 8px; }
.tree-combo { width: 43px; color: #999; background: #d2d2d2; }
.tree-combo svg { opacity: .4; }
.dim { color: #999; }
.auto { margin-left: auto; display: flex; align-items: center; gap: 3px; letter-spacing: -.12px; }
.auto svg { width: 9px; height: 9px; }
.btn { margin-left: auto; margin-right: -2px; width: 20px; height: 12px; line-height: 10px; text-align: center; border: 1px solid #adadad; background: #e3e3e3; }

.status { display: flex; align-items: center; padding: 1px 0 0 3px; }
.locate { width: 124px; height: 13px; border: 1px solid #777; background: #fff; color: #777; display: flex; align-items: center; gap: 4px; padding-left: 4px; }
.locate svg { width: 8px; height: 8px; }
.msg { width: 575px; padding-left: 5px; letter-spacing: -.11px; }
.lbl { display: flex; align-items: center; gap: 3px; }
.coord { width: 40px; padding-left: 5px; }
.field { height: 13px; border: 1px solid #777; background: #fff; padding-left: 1px; display: flex; align-items: center; justify-content: space-between; }
.field svg { width: 8px; height: 8px; }
.field .spin { height: 12px; background: #eee; }
.f-coord { width: 61px; }
.sic { width: 12px; height: 11px; margin-left: 1px; }
.scale { width: 25px; padding-left: 7px; }
.f-scale { width: 54px; }
.magn { width: 35px; padding-left: 6px; }
.magn + .field { margin-left: 1px; }
.f-mag { width: 51px; }
.rot { width: 37px; padding-left: 6px; }
.f-rot { width: 51px; }
.render { width: 46px; padding-left: 3px; letter-spacing: -.12px; }
.render svg { width: 9px; height: 9px; }
.epsg { width: 54px; letter-spacing: -.1px; }
.epsg svg { width: 10px; height: 10px; }
.bubble { width: 12px; height: 11px; margin-left: 1px; }

.callout { position: absolute; left: 0; top: 0; width: 1200px; height: 650px; pointer-events: none; }

.cell { fill: #aad2de; stroke: #b7bbbe; stroke-width: 1; }
.hex { stroke: #4c4c30; stroke-width: .8; }
.rim { fill: none; stroke: #a9aa9c; stroke-width: 1; }
.hex.y { fill: #fde725; } .hex.g { fill: #5dc863; } .hex.t { fill: #21908d; }
.hex.r { fill: #ad6430; stroke: #f81414; stroke-width: 1.200; }
.halo { fill: #fff; fill-opacity: .55; }
.pt { fill: #151526; }
.pt.hot { fill: #a80c18; }
```
FILE: map.js
```js
// Hexagonal grid: pitch 38.17 horizontally, 33.07 vertically; odd rows are shifted by half a cell.
const PX = 38.17, PY = 33.07, HW = PX / 2, HH = 21.9, SH = 11.1;
const rows = {
  0: '16y', 1: '4y 9y', 3: '10y',
  4: '7g 8y 10y 11t 12y 19y',
  5: '6y 7y 8y 10g 12y 15y',
  6: '1y 4y 7y 8t 10y 11y 12y 15y',
  7: '1y 4y 5y 7y 8t 9y 10y 12y',
  8: '2g 9y 10g 11g',
  9: '-1y 3y 5y 7y 8g 9y 10y 11y 12y 13t 14t',
  10: '6y 8y 9g 10y 11y 13y 14y 18y',
  11: '0y 1y 8t 9g 11y 12g 14y',
  12: '5y 11y 12y 14y 17g 15r',
  13: '4y 7y 12t 16y',
  14: '1y 2g 7y 9y 14y',
  15: '0y 2y 4y 6g 8y 13y 17y',
  16: '1y 3y 5y 7g 10y 12y 16y 17y 18y',
  17: '0y 6y 9y 11y 15g 18y'
};
// Sample points per map tile: origin followed by offsets in thirds of a pixel.
const points = [
  [228, 68, '522,110 842,371 842,476 948,476 760,556 843,530 955,528 470,583 202,637 202,689 592,751 682,689 826,667 895,689 929,667 1002,620 1002,654 1015,674 976,695 1002,744 1071,697 271,805 256,849 1054,849 1128,860'],
  [600, 68, '27,132 739,50 111,337 46,476 98,476 128,482 205,476 152,424 205,439 312,424 376,511 657,510 1054,423 98,637 205,637 323,628 152,689 348,701 632,637 59,815 152,849 205,849'],
  [228, 350, '29,66 436,65 665,38 723,203 54,306 187,299 575,376 533,520 895,110 903,162 978,93 1054,84 1062,119 1102,119 1085,216 1100,226 1054,272 987,306 990,331 1109,323 895,430 817,542 125,593 114,647 288,565 245,611 309,613 163,748 408,739 575,643 661,771 751,685 789,643 811,754 843,748 951,643 1026,597'],
  [600, 350, '169,61 205,110 385,108 419,57 448,27 484,102 569,68 578,110 632,110 205,164 98,216 430,196 471,164 970,147 334,280 250,310 366,323 525,271 516,319 145,411 259,376 366,430 312,482 378,473 885,381 891,386 827,465 482,600 471,696 84,786 259,748 244,820 792,803 844,748 915,621 951,748']
];
const center = (r, c) => [(r % 2 ? 257.65 : 238.57) + PX * c, 78.4 + PY * r];
const hexPath = ([x, y]) =>
  `M${x} ${y - HH}l${HW} ${HH - SH}v${2 * SH}l${-HW} ${HH - SH}l${-HW} ${SH - HH}v${-2 * SH}z`;
// Upper and right sides, drawn lighter where the neighbour is an empty cell.
const rimPath = ([x, y]) => `M${x - HW} ${y - SH}l${HW} ${SH - HH}l${HW} ${HH - SH}v${2 * SH}`;
let cells = '', hexes = '', rims = '', red = '';
for (let r = -1; r < 19; r++)
  for (let c = -1; c < 21; c++)
    cells += `<path class="cell" d="${hexPath(center(r, c))}"/>`;
for (const r in rows)
  for (const item of rows[r].split(' ')) {
    const c = parseInt(item, 10), kind = item.slice(-1), p = center(+r, c);
    const path = `<path class="hex ${kind}" d="${hexPath(p)}"/>`;
    if (kind === 'r') { red += path; continue; }
    rims += `<path class="rim" d="${rimPath(p)}"/>`;
    hexes += path;
  }
const has = (r, c) => (rows[r] || '').split(' ').some(s => s && parseInt(s, 10) === c);
let light = '';
for (const r in rows)
  for (const item of rows[r].split(' ')) {
    const c = parseInt(item, 10), R = +r, [x, y] = center(R, c);
    if (item.endsWith('r')) continue;
    const left = R % 2 ? c : c - 1;
    if (!has(R - 1, left)) light += `M${x - HW} ${y - SH}L${x} ${y - HH}`;
    if (!has(R - 1, left + 1)) light += `M${x} ${y - HH}L${x + HW} ${y - SH}`;
    if (!has(R, c + 1)) light += `M${x + HW} ${y - SH}v${2 * SH}`;
  }
let dots = '';
for (const [ox, oy, list] of points)
  for (const q of list.split(' ')) {
    const [x, y] = q.split(',').map(Number);
    const cx = ox + x / 3, cy = oy + y / 3;
    dots += `<circle class="halo" cx="${cx}" cy="${cy}" r="1.75"/><circle class="pt" cx="${cx}" cy="${cy}" r="1.05"/>`;
  }
dots += '<circle class="pt hot" cx="812.7" cy="462" r=".9"/><circle class="pt hot" cx="792.6" cy="475.3" r=".8"/>';
document.getElementById('map').innerHTML = cells + hexes + `<path class="rim" d="${light}"/>` + red + dots;
```
